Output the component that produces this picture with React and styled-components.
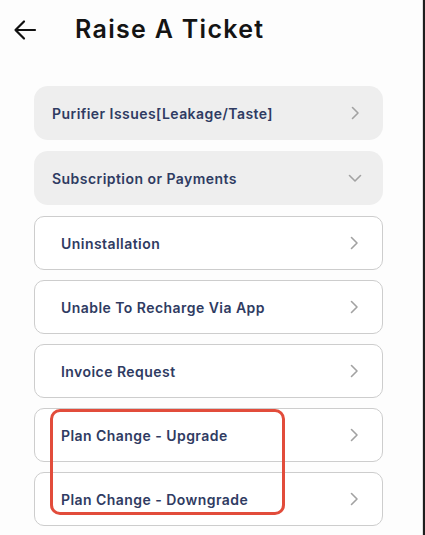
import React from "react";
import styled, { createGlobalStyle } from "styled-components";

const Global = createGlobalStyle`
  html, body { margin: 0; padding: 0; background: #fdfdfd; }
  body { font-family: Inter, "Open Sans", sans-serif; }
`;

const Screen = styled.div`
  width: 425px;
  height: 535px;
  box-sizing: border-box;
  background: #fdfdfd;
  border-right: 2px solid #1e1e1e;
  box-shadow: inset -1px 0 0 #dedede;
  overflow: hidden;
`;

const Header = styled.div`
  display: flex;
  align-items: center;
  height: 58px;
  padding-left: 13px;
  box-sizing: border-box;
`;

const BackButton = styled.div`
  width: 24px;
  height: 24px;
  display: flex;
  align-items: center;
  justify-content: center;
  margin-right: 38px;
  margin-top: 1px;
`;

const Title = styled.h1`
  margin: 0;
  font-family: Inter, sans-serif;
  font-weight: 600;
  font-size: 25px;
  color: #141414;
  letter-spacing: 1.3px;
`;

const List = styled.div`
  display: flex;
  flex-direction: column;
  gap: 10px;
  padding: 28px 0 0 34px;
  width: 349px;
`;

const Item = styled.div`
  height: 54px;
  box-sizing: border-box;
  flex-shrink: 0;
  border-radius: ${(p) => (p.$variant === "filled" ? "14px" : "10px")};
  background: ${(p) => (p.$variant === "filled" ? "#eeeeee" : "#ffffff")};
  border: ${(p) => (p.$variant === "filled" ? "none" : "1px solid #cdcdcd")};
  margin-bottom: ${(p) => (p.$variant === "filled" ? "1px" : "0")};
  display: flex;
  align-items: center;
  justify-content: space-between;
  padding: 0 21px 0 ${(p) => (p.$variant === "filled" ? "18px" : "26px")};
`;

const Label = styled.span`
  font-family: Inter, sans-serif;
  font-weight: 600;
  font-size: 14px;
  letter-spacing: 0.45px;
  color: #2f3b62;
`;

const Group = styled.div`
  position: relative;
  display: flex;
  flex-direction: column;
  gap: 10px;
`;

const Highlight = styled.div`
  position: absolute;
  left: 16px;
  top: 1px;
  width: 235px;
  height: 106px;
  box-sizing: border-box;
  border: 3px solid #e24c3b;
  border-radius: 10px;
  pointer-events: none;
`;

const Chevron = ({ down }) => (
  <svg width="14" height="14" viewBox="0 0 14 14" fill="none">
    {down ? (
      <path d="M1.5 4.5L7 10l5.5-5.5" stroke="#a2a2a2" strokeWidth="1.6" strokeLinecap="round" strokeLinejoin="round" />
    ) : (
      <path d="M4.5 1.5L10 7l-5.5 5.5" stroke="#a2a2a2" strokeWidth="1.6" strokeLinecap="round" strokeLinejoin="round" />
    )}
  </svg>
);

const Arrow = () => (
  <svg width="24" height="24" viewBox="0 0 24 24" fill="none">
    <path d="M22 12H2.5M11 3.5L2.5 12l8.5 8.5" stroke="#111" strokeWidth="2.2" strokeLinecap="round" strokeLinejoin="round" />
  </svg>
);

const Row = ({ label, variant, down }) => (
  <Item $variant={variant}>
    <Label>{label}</Label>
    <Chevron down={down} />
  </Item>
);

export default function App() {
  return (
    <>
      <Global />
      <Screen>
        <Header>
          <BackButton>
            <Arrow />
          </BackButton>
          <Title>Raise A Ticket</Title>
        </Header>
        <List>
          <Row variant="filled" label="Purifier Issues[Leakage/Taste]" />
          <Row variant="filled" label="Subscription or Payments" down />
          <Row variant="outlined" label="Uninstallation" />
          <Row variant="outlined" label="Unable To Recharge Via App" />
          <Row variant="outlined" label="Invoice Request" />
          <Group>
            <Row variant="outlined" label="Plan Change - Upgrade" />
            <Row variant="outlined" label="Plan Change - Downgrade" />
            <Highlight />
          </Group>
        </List>
      </Screen>
    </>
  );
}
